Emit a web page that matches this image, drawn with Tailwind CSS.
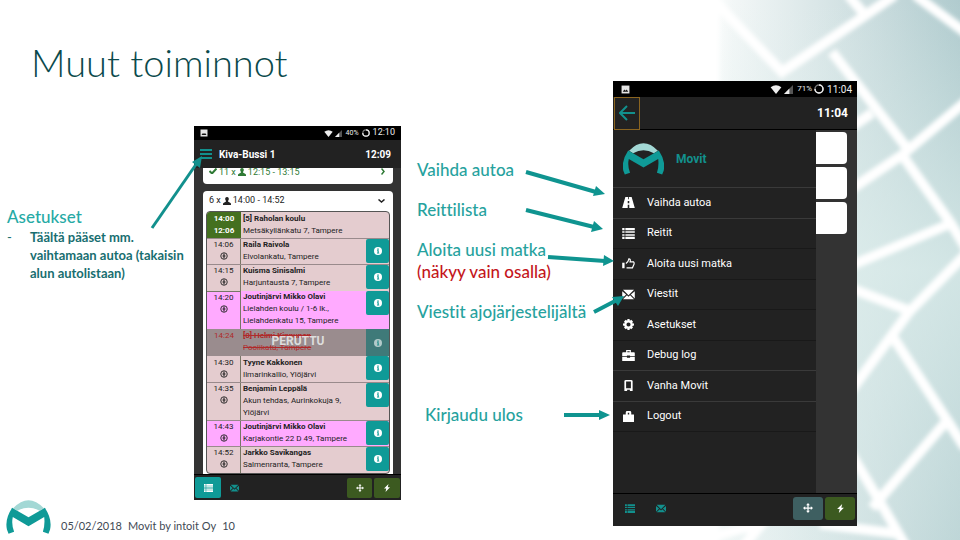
<!DOCTYPE html>
<html lang="fi">
<head>
    <meta charset="UTF-8">
    <meta name="viewport" content="width=device-width, initial-scale=1.0">
    <title>Muut toiminnot</title>
    <script src="https://cdn.jsdelivr.net/npm/@tailwindcss/browser@4"></script>
</head>
<body class="relative bg-white font-[Lato,sans-serif] [font-variant-ligatures:none] overflow-x-hidden">

    <!-- Shared icons -->
    <svg class="hidden">
        <symbol id="logo" viewBox="0 0 134 104">
            <path d="M20 25Q67 -24 114 25L101 33Q67 14 33 33Z" fill="#a3d8d5"/>
            <path d="M17 24L67 53L117 24Q140 58 133 90L128 103L111 97Q118 75 115 52L67 80L19 52Q14 75 23 97L6 103L1 90Q-6 58 17 24Z" fill="#0f9a97"/>
        </symbol>
        <symbol id="picture" viewBox="0 0 16 16"><path d="M1 1h14v14H1z" fill="#e5e5e5"/><path d="M3 12l3-4 2 2 2-2 3 4z" fill="#111"/></symbol>
        <symbol id="wifi" viewBox="0 0 24 20"><path d="M0 5Q12 -4 24 5L12 20Z" fill="#eee"/></symbol>
        <symbol id="signal" viewBox="0 0 20 20"><path d="M20 0V20H0Z" fill="#555"/><path d="M12 8V20H0Z" fill="#eee"/></symbol>
        <symbol id="battery" viewBox="0 0 20 20"><circle cx="10" cy="10" r="8" fill="none" stroke="#777" stroke-width="3"/><path d="M10 2a8 8 0 1 1-8 8" fill="none" stroke="#eee" stroke-width="3"/></symbol>
        <symbol id="list" viewBox="0 0 16 14"><path d="M0 0h3v3H0zM4 0h12v3H4zM0 4h3v2H0zM4 4h12v2H4zM0 8h3v2H0zM4 8h12v2H4zM0 11h3v3H0zM4 11h12v3H4z" fill="currentColor"/></symbol>
        <symbol id="mail" viewBox="0 0 16 14"><path d="M1 1h14L8 8zM0 3l5 4-5 5zM16 3l-5 4 5 5zM6 8l2 2 2-2 5 5H1z" fill="currentColor"/></symbol>
        <symbol id="user" viewBox="0 0 16 16"><path d="M8 0c3 0 4 2 3.500 5-.3 1.500-1.500 2-1.500 4l5 3c1 .7 1 2 1 4H0c0-2 0-3.300 1-4l5-3c0-2-1.200-2.500-1.500-4C4 2 5 0 8 0z" fill="currentColor"/></symbol>
        <symbol id="info" viewBox="0 0 16 16"><circle cx="8" cy="8" r="8" fill="#fff"/><path d="M6.500 3h3v2.500h-3zM6 6.500h3.500v5h1V13H6v-1.500h1V8H6z" fill="#0f9a97"/></symbol>
        <symbol id="pickup" viewBox="0 0 16 16"><circle cx="8" cy="8" r="6.500" fill="none" stroke="currentColor" stroke-width="1.800"/><path d="M8 3v10M5 8h6" stroke="currentColor" stroke-width="2.200"/></symbol>
        <symbol id="move" viewBox="0 0 16 16"><path d="M8 0l3 3.500H9V7h3.500V5L16 8l-3.500 3V9H9v3.500h2L8 16l-3-3.500h2V9H3.500v2L0 8l3.500-3v2H7V3.500H5z" fill="currentColor"/></symbol>
        <symbol id="flash" viewBox="0 0 16 16"><path d="M11 0L2 9h4.500L5 16l9-9.500H9.500z" fill="currentColor"/></symbol>
        <symbol id="road" viewBox="0 0 16 14"><path d="M4 0h3.500v3h1V0H12l4 14H9v-4H7v4H0zM7 5v3h2V5z" fill="currentColor"/></symbol>
        <symbol id="thumb" viewBox="0 0 16 14"><path d="M0 6h3v7H0z" fill="currentColor"/><path d="M4.700 7Q8 5 8.500 1q2.500 0 1.500 4h4.500q1 1 .5 3l-2 4.500H5.500" fill="none" stroke="currentColor" stroke-width="1.500"/></symbol>
        <symbol id="cog" viewBox="0 0 16 16"><path fill-rule="evenodd" d="M6.500 0h3l.5 2.500 2-1.300 2.500 2.500L13.300 6l2.700.5v3l-2.700.5 1.200 2.300-2.500 2.500-2-1.300-.5 2.500h-3L6 13.500l-2 1.300-2.500-2.500L2.700 10 0 9.500v-3L2.700 6 1.500 3.700 4 1.200l2 1.300zM8 5a3 3 0 1 0 0 6 3 3 0 0 0 0-6z" fill="currentColor"/></symbol>
        <symbol id="case" viewBox="0 0 16 14"><path fill-rule="evenodd" d="M5 3V0h6v3h4q1 0 1 1v4h-6V7H6v1H0V4q0-1 1-1zM6.500 1.500V3h3V1.500zM0 9h6v1h4V9h6v5H0z" fill="currentColor"/></symbol>
        <symbol id="phone" viewBox="0 0 16 16"><path fill-rule="evenodd" d="M4 0h8q1 0 2 1v15h-4v-2H6v2H2V1q1-1 2-1zM4.500 2v10h7V2z" fill="currentColor"/></symbol>
        <symbol id="lock" viewBox="0 0 16 16"><path fill-rule="evenodd" d="M4 5V2q0-2 2-2h4q2 0 2 2v3h4v11H0V5zM7 2.500V5h2V2.500z" fill="currentColor"/></symbol>
    </svg>

    <!-- Background tiles -->
    <svg class="absolute right-0 top-0 w-[260px] h-[540px] -z-10" viewBox="700 0 260 540">
        <defs>
            <linearGradient id="fade">
                <stop offset="0" stop-color="#fff"/>
                <stop offset=".08" stop-color="#f3f7f7"/>
                <stop offset=".4" stop-color="#dce8e9"/>
                <stop offset="1" stop-color="#b0cbce"/>
            </linearGradient>
            <linearGradient id="tint" x2="0" y2="1">
                <stop offset="0" stop-color="#e0f0ee" stop-opacity="0"/>
                <stop offset=".5" stop-color="#e0f0ee" stop-opacity=".7"/>
                <stop offset="1" stop-color="#e0f0ee" stop-opacity=".3"/>
            </linearGradient>
            <filter id="soft"><feGaussianBlur stdDeviation="2"/></filter>
        </defs>
        <path d="M712 0h248v540H712z" fill="url(#fade)"/>
        <path d="M712 0h248v540H712z" fill="url(#tint)"/>
        <g fill="none" stroke="#fff" stroke-width="10" filter="url(#soft)">
            <path d="M700 -14L782 72L895 -5M848 -5L866 16M832 52L907 148M915 -5L970 36"/>
            <path d="M850 190L902 155L970 98M902 155L950 222L970 255M850 266L947 225M850 128L872 113"/>
            <path d="M850 288L910 311L970 250M912 308L850 392M893 337L947 420L965 448M950 417L872 508M850 452L880 502L908 550"/>
            <path d="M700 540L760 524M740 550L765 520M820 524L900 534"/>
            <path d="M714 -5V545"/>
        </g>
    </svg>

    <div class="flex min-h-screen">
        <div class="relative flex-1 flex flex-col">
            <h1 class="pl-[31px] pt-[38px] pb-[40px] text-[38px] leading-[48px] font-light text-[#0b4a4c]">Muut toiminnot</h1>

            <div class="flex">
                <section class="w-[194px] pt-[80px] pl-[7px]">
                    <h2 class="text-[17px] leading-[22px] font-medium text-[#26aaa5]">Asetukset</h2>
                    <ul class="text-[13px] leading-[18px] font-bold text-[#186e70]">
                        <li class="flex"><span class="w-[23px] font-normal">-</span><span class="flex-1">Täältä pääset mm.<br>vaihtamaan autoa (takaisin<br>alun autolistaan)</span></li>
                    </ul>
                </section>

                <!-- Route view -->
                <section class="w-[207px] shrink-0 bg-[#333] font-[Roboto,sans-serif] text-[8px] text-[#222]">
                    <div class="flex items-center h-[14px] px-[6px] bg-black text-[9px] text-[#eee]">
                        <svg class="size-2"><use href="#picture"/></svg>
                        <svg class="w-[9px] h-[7px] ml-auto"><use href="#wifi"/></svg>
                        <svg class="size-[7px] ml-[2px]"><use href="#signal"/></svg>
                        <span class="ml-1 text-[7px]">40%</span>
                        <svg class="size-2 mx-[3px]"><use href="#battery"/></svg>
                        <span>12:10</span>
                    </div>
                    <header class="flex items-center h-[28px] px-[6px] bg-[#222] text-[10px] font-bold text-white">
                        <button class="grid gap-[2px] w-3 mr-[7px]" aria-label="Valikko">
                            <span class="h-[2px] bg-[#12908d]"></span><span class="h-[2px] bg-[#12908d]"></span><span class="h-[2px] bg-[#12908d]"></span>
                        </button>
                        <span>Kiva-Bussi 1</span>
                        <span class="ml-auto mr-1">12:09</span>
                    </header>
                    <div class="h-[306px] pl-[9px] pr-[8px] overflow-hidden">
                        <div class="flex items-start h-[16px] mb-[7px] pl-[6px] pr-[8px] rounded-b bg-white overflow-hidden text-[9px] leading-[8px] text-[#2f7a35]">
                            <svg class="w-2 h-[6px] mr-[2px]" viewBox="0 0 16 12"><path d="M1 6l5 5L15 1" fill="none" stroke="currentColor" stroke-width="4"/></svg>
                            <span>11 x</span>
                            <svg class="size-2 mx-[2px]"><use href="#user"/></svg>
                            <span>12:15 - 13:15</span>
                            <svg class="w-1 h-[7px] ml-auto" viewBox="0 0 8 14"><path d="M1 1l5 6-5 6" fill="none" stroke="currentColor" stroke-width="3"/></svg>
                        </div>
                        <div class="px-[3px] rounded-t bg-white">
                            <div class="flex items-center h-[20px] px-[3px] text-[9px]">
                                <span>6 x</span>
                                <svg class="size-2 mx-[2px]"><use href="#user"/></svg>
                                <span>14:00 - 14:52</span>
                                <svg class="w-[7px] h-1 ml-auto mr-[2px]" viewBox="0 0 14 8"><path d="M1 1l6 5 6-5" fill="none" stroke="currentColor" stroke-width="3"/></svg>
                            </div>
                            <ul class="border border-[#555] rounded bg-[#e4cccf] leading-[12px] overflow-hidden">
                                <li class="flex h-[27px] border-b border-[#998a8c]">
                                    <div class="w-[34px] py-px bg-[#44701f] text-center font-bold text-white">14:00<br>12:06</div>
                                    <div class="pl-[2px] pt-px"><b>[5] Raholan koulu</b><br>Metsäkyllänkatu 7, Tampere</div>
                                </li>
                                <li class="flex h-[26px] border-b border-[#998a8c]">
                                    <div class="w-[34px] border-r border-[#776] text-center">14:06<svg class="size-2 mx-auto mt-px"><use href="#pickup"/></svg></div>
                                    <div class="flex-1 pl-[2px]"><b>Raila Raivola</b><br>Elvolankatu, Tampere</div>
                                    <button class="grid place-items-center w-[23px] h-[24px] rounded-[2px] bg-[#0f9a97]" aria-label="Tiedot"><svg class="size-2"><use href="#info"/></svg></button>
                                </li>
                                <li class="flex h-[26px]">
                                    <div class="w-[34px] border-r border-[#776] text-center">14:15<svg class="size-2 mx-auto mt-px"><use href="#pickup"/></svg></div>
                                    <div class="flex-1 pl-[2px]"><b>Kuisma Sinisalmi</b><br>Harjuntausta 7, Tampere</div>
                                    <button class="grid place-items-center w-[23px] h-[24px] rounded-[2px] bg-[#0f9a97]" aria-label="Tiedot"><svg class="size-2"><use href="#info"/></svg></button>
                                </li>
                                <li class="flex h-[38px] bg-[#ffaaff]">
                                    <div class="w-[34px] border-r border-t border-[#776] text-center">14:20<svg class="size-2 mx-auto mt-px"><use href="#pickup"/></svg></div>
                                    <div class="flex-1 pl-[2px]"><b>Joutinjärvi Mikko Olavi</b><br>Lielahden koulu / 1-6 lk.,<br>Lielahdenkatu 15, Tampere</div>
                                    <button class="grid place-items-center w-[23px] h-[24px] rounded-[2px] bg-[#0f9a97]" aria-label="Tiedot"><svg class="size-2"><use href="#info"/></svg></button>
                                </li>
                                <li class="relative flex h-[27px] bg-[#9a8c8e] text-[#b02a2a]">
                                    <div class="w-[34px] pt-px text-center">14:24</div>
                                    <div class="flex-1 pl-[2px] pt-px line-through"><b>[0] Helmi Kinnunen</b><br>Poolikatu, Tampere</div>
                                    <div class="grid place-items-center w-[23px] bg-[#3f7a79]"><svg class="size-2 opacity-60"><use href="#info"/></svg></div>
                                    <strong class="absolute inset-0 text-center text-[12px] leading-[24px] font-bold text-[#ddd]">PERUTTU</strong>
                                </li>
                                <li class="flex h-[27px] border-b border-[#998a8c]">
                                    <div class="w-[34px] pt-px border-r border-[#776] text-center">14:30<svg class="size-2 mx-auto mt-px"><use href="#pickup"/></svg></div>
                                    <div class="flex-1 pl-[2px] pt-px"><b>Tyyne Kakkonen</b><br>Ilmarinkallio, Ylöjärvi</div>
                                    <button class="grid place-items-center w-[23px] h-[24px] rounded-[2px] bg-[#0f9a97]" aria-label="Tiedot"><svg class="size-2"><use href="#info"/></svg></button>
                                </li>
                                <li class="flex h-[38px] border-b border-[#998a8c]">
                                    <div class="w-[34px] border-r border-[#776] text-center">14:35<svg class="size-2 mx-auto mt-px"><use href="#pickup"/></svg></div>
                                    <div class="flex-1 pl-[2px]"><b>Benjamin Leppälä</b><br>Akun tehdas, Aurinkokuja 9,<br>Ylöjärvi</div>
                                    <button class="grid place-items-center w-[23px] h-[24px] rounded-[2px] bg-[#0f9a97]" aria-label="Tiedot"><svg class="size-2"><use href="#info"/></svg></button>
                                </li>
                                <li class="flex h-[26px] border-b border-[#998a8c] bg-[#ffaaff]">
                                    <div class="w-[34px] border-r border-[#776] text-center">14:43<svg class="size-2 mx-auto mt-px"><use href="#pickup"/></svg></div>
                                    <div class="flex-1 pl-[2px]"><b>Joutinjärvi Mikko Olavi</b><br>Karjakontie 22 D 49, Tampere</div>
                                    <button class="grid place-items-center w-[23px] h-[24px] rounded-[2px] bg-[#0f9a97]" aria-label="Tiedot"><svg class="size-2"><use href="#info"/></svg></button>
                                </li>
                                <li class="flex h-[26px]">
                                    <div class="w-[34px] border-r border-[#776] text-center">14:52<svg class="size-2 mx-auto mt-px"><use href="#pickup"/></svg></div>
                                    <div class="flex-1 pl-[2px]"><b>Jarkko Savikangas</b><br>Salmenranta, Tampere</div>
                                    <button class="grid place-items-center w-[23px] h-[24px] rounded-[2px] bg-[#0f9a97]" aria-label="Tiedot"><svg class="size-2"><use href="#info"/></svg></button>
                                </li>
                            </ul>
                        </div>
                    </div>
                    <footer class="flex items-center h-[26px] px-px border-t border-black bg-[#222] text-white">
                        <button class="grid place-items-center w-[26px] h-[21px] rounded-[2px] bg-[#0f9a97]" aria-label="Lista"><svg class="w-[9px] h-2"><use href="#list"/></svg></button>
                        <button class="ml-[9px] text-[#12908d]" aria-label="Viestit"><svg class="w-[9px] h-2"><use href="#mail"/></svg></button>
                        <button class="grid place-items-center w-[25px] h-[20px] ml-auto rounded-[2px] bg-[#3c5a20]" aria-label="Kartta"><svg class="size-2"><use href="#move"/></svg></button>
                        <button class="grid place-items-center w-[26px] h-[20px] ml-[2px] rounded-[2px] bg-[#3c5a20]" aria-label="Pika"><svg class="size-2"><use href="#flash"/></svg></button>
                    </footer>
                </section>

                <section class="flex-1 flex flex-col gap-[18px] pt-[33px] pl-[16px] text-[17px] leading-[22px] font-medium text-[#26a29e]">
                    <p>Vaihda autoa</p>
                    <p>Reittilista</p>
                    <p>Aloita uusi matka<br><span class="text-[#c4161c]">(näkyy vain osalla)</span></p>
                    <p>Viestit ajojärjestelijältä</p>
                    <p class="pt-[63px] pl-[8px]">Kirjaudu ulos</p>
                </section>
            </div>

            <footer class="flex items-end gap-[6px] mt-auto pl-[6px] pb-[6px] text-[11px] leading-[16px] text-[#3f4a55]">
                <svg class="w-[45px] h-[34px] mr-[4px]"><use href="#logo"/></svg>
                <span>05/02/2018</span>
                <span>Movit by intoit Oy</span>
                <span>10</span>
            </footer>

            <!-- Callout arrows -->
            <svg class="absolute left-[145px] top-[150px] w-[65px] h-[85px] z-10" viewBox="145 150 65 85" stroke="#12908d" fill="#12908d">
                <path d="M152 228L197 163" stroke-width="3"/><path d="M202 156l-2 12-8-6z" stroke="none"/>
            </svg>
            <svg class="absolute -right-[17px] top-[160px] w-[110px] h-[270px] z-10" viewBox="520 160 110 270" stroke="#0f9490" fill="#0f9490">
                <g stroke-width="4">
                    <path d="M526 172L596 192M526 210L594 227M548 257L605 261M594 312L617 300M564 415L600 415"/>
                </g>
                <path d="M605 194l-12 2 3-10zM603 229l-12 3 3-11zM614 261l-11 5 1-11zM624 296l-6 10-6-9zM610 415l-11 5v-10z" stroke="none"/>
            </svg>
        </div>

        <!-- Menu view -->
        <section class="w-[244px] h-[445px] mt-[81px] mr-[103px] flex flex-col bg-[#333] font-[Roboto,sans-serif] text-white">
            <div class="flex items-center h-[16px] px-[5px] bg-black text-[#eee]">
                <svg class="size-[9px] ml-[3px]"><use href="#picture"/></svg>
                <svg class="w-[12px] h-[9px] ml-auto"><use href="#wifi"/></svg>
                <svg class="size-[9px] ml-[2px]"><use href="#signal"/></svg>
                <span class="ml-1 text-[8px]">71%</span>
                <svg class="size-[10px] ml-[2px] mr-[3px]"><use href="#battery"/></svg>
                <span class="text-[10px]">11:04</span>
            </div>
            <header class="flex items-center h-[33px] pl-px pr-[9px] border-b border-black bg-[#222] text-[12px] font-bold">
                <button class="grid place-items-center w-[26px] h-[33px] border border-[#8a6420]" aria-label="Takaisin">
                    <svg class="size-4" viewBox="0 0 16 16"><path d="M8 1L1 8l7 7M1 8h15" fill="none" stroke="#12908d" stroke-width="2"/></svg>
                </button>
                <span class="ml-auto">11:04</span>
            </header>
            <div class="flex flex-1">
                <nav class="w-[203px] bg-[#222]">
                    <div class="flex items-center gap-3 h-[57px] pl-[10px] text-[12px] font-bold text-[#12908d]">
                        <svg class="w-[41px] h-[32px]"><use href="#logo"/></svg>
                        <span>Movit</span>
                    </div>
                    <ul class="grid auto-rows-fr h-[245px] border-b border-[#191919] text-[11px]">
                        <li class="border-t border-[#3a3a3a]"><a href="#" class="flex items-center gap-3 h-full pl-[9px]"><svg class="w-[13px] h-[11px]"><use href="#road"/></svg>Vaihda autoa</a></li>
                        <li class="border-t border-[#3a3a3a]"><a href="#" class="flex items-center gap-3 h-full pl-[9px]"><svg class="w-[13px] h-[11px]"><use href="#list"/></svg>Reitit</a></li>
                        <li class="border-t border-[#191919]"><a href="#" class="flex items-center gap-3 h-full pl-[9px]"><svg class="w-[13px] h-[11px]"><use href="#thumb"/></svg>Aloita uusi matka</a></li>
                        <li class="border-t border-[#191919]"><a href="#" class="flex items-center gap-3 h-full pl-[9px]"><svg class="w-[13px] h-[11px]"><use href="#mail"/></svg>Viestit</a></li>
                        <li class="border-t border-[#191919]"><a href="#" class="flex items-center gap-3 h-full pl-[9px]"><svg class="w-[13px] h-[11px]"><use href="#cog"/></svg>Asetukset</a></li>
                        <li class="border-t border-[#191919]"><a href="#" class="flex items-center gap-3 h-full pl-[9px]"><svg class="w-[13px] h-[11px]"><use href="#case"/></svg>Debug log</a></li>
                        <li class="border-t border-[#3a3a3a]"><a href="#" class="flex items-center gap-3 h-full pl-[9px]"><svg class="w-[13px] h-[11px]"><use href="#phone"/></svg>Vanha Movit</a></li>
                        <li class="border-t border-[#3a3a3a]"><a href="#" class="flex items-center gap-3 h-full pl-[9px]"><svg class="w-[13px] h-[11px]"><use href="#lock"/></svg>Logout</a></li>
                    </ul>
                </nav>
                <div class="flex flex-col gap-[3px] w-[31px] pt-[2px]">
                    <div class="h-[32px] rounded-r bg-white"></div>
                    <div class="h-[32px] rounded-r bg-white"></div>
                    <div class="h-[32px] rounded-r bg-white"></div>
                </div>
            </div>
            <footer class="flex items-center h-[33px] pl-[12px] pr-[2px] pb-1 border-t border-black bg-[#222]">
                <button class="text-[#12908d]" aria-label="Lista"><svg class="w-[10px] h-[9px]"><use href="#list"/></svg></button>
                <button class="ml-[21px] text-[#12908d]" aria-label="Viestit"><svg class="w-[10px] h-[9px]"><use href="#mail"/></svg></button>
                <button class="grid place-items-center w-[30px] h-[23px] ml-auto rounded-[3px] bg-[#3e5f61]" aria-label="Kartta"><svg class="size-[10px]"><use href="#move"/></svg></button>
                <button class="grid place-items-center w-[30px] h-[23px] ml-[2px] rounded-[3px] bg-[#3c5a20]" aria-label="Pika"><svg class="size-[9px]"><use href="#flash"/></svg></button>
            </footer>
        </section>
    </div>
</body>
</html>
